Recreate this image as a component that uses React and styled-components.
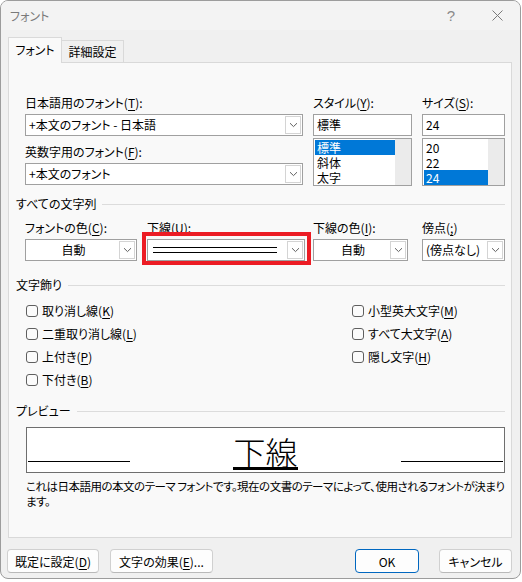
import React from 'react'
import styled, { createGlobalStyle } from 'styled-components'

const GlobalStyle = createGlobalStyle`
    body {
        margin: 0;
        background: #ffffff;
        font-family: "Noto Sans CJK JP", "Noto Sans", sans-serif;
        font-size: 12px;
        color: #000;
        font-feature-settings: "palt";
    }
    * { box-sizing: border-box; }
`;

const Window = styled.div`
    width: 521px;
    height: 579px;
    border: 1px solid #9c9c9c;
    border-radius: 8px;
    background: #f0f0f0;
    display: flex;
    flex-direction: column;
    overflow: hidden;
`;

const TitleBar = styled.div`
    height: 29px;
    display: flex;
    align-items: center;
    padding-left: 9px;
    background: #f3f3f3;
    color: #7a7a7a;
`;

const TitleText = styled.div`
    flex: 1;
`;

const CaptionButton = styled.div`
    width: 46px;
    height: 29px;
    display: flex;
    align-items: center;
    justify-content: center;
    color: #8a8a8a;
    font-family: "Liberation Sans", sans-serif;
    font-size: 15px;
`;

const TabStrip = styled.div`
    margin-top: 7px;
    padding-left: 7px;
    height: 25px;
    display: flex;
    align-items: flex-end;
`;

const Tab = styled.div`
    width: ${p => p.$active ? 54 : 62}px;
    height: ${p => p.$active ? 26 : 22}px;
    margin-bottom: ${p => p.$active ? -1 : 0}px;
    background: ${p => p.$active ? '#f9f9f9' : '#f0f0f0'};
    border: 1px solid #d9d9d9;
    border-bottom: none;
    border-left: ${p => p.$active ? '1px solid #d9d9d9' : 'none'};
    position: relative;
    z-index: ${p => p.$active ? 1 : 0};
    display: flex;
    align-items: center;
    justify-content: center;
    padding-bottom: ${p => p.$active ? 2 : 0}px;
`;

const Panel = styled.div`
    margin: 0 8px 0 7px;
    height: 476px;
    border: 1px solid #d9d9d9;
    background: #f9f9f9;
    padding: 31px 6px 0 7px;
`;

const TopGrid = styled.div`
    margin-left: 9px;
    display: grid;
    grid-template-columns: 278px 99px 83px;
    column-gap: 10px;
`;

const Column = styled.div`
    display: flex;
    flex-direction: column;
    gap: ${p => p.$gap || 0}px;
`;

const Field = styled.div`
    display: flex;
    flex-direction: column;
    width: ${p => p.$w ? p.$w + 'px' : 'auto'};
    margin-left: ${p => p.$ml || 0}px;
`;

const Label = styled.div`
    height: 18px;
    line-height: 18px;
    margin-bottom: 2px;
    white-space: nowrap;

    u { text-decoration-thickness: 1px; text-underline-offset: 2px; }
`;

const ComboBox = styled.div`
    height: 22px;
    border: 1px solid #a0a0a0;
    background: #fff;
    display: flex;
`;

const ComboText = styled.div`
    flex: 1;
    padding-left: 3px;
    line-height: 20px;
    text-align: ${p => p.$center ? 'center' : 'left'};
    white-space: nowrap;
    overflow: hidden;
`;

const ArrowBox = styled.div`
    width: 16px;
    margin: 1px;
    border: 1px solid #d4d4d4;
    display: flex;
    align-items: center;
    justify-content: center;
`;

const TextBox = styled.div`
    height: 22px;
    border: 1px solid #a0a0a0;
    background: #fff;
    padding-left: 3px;
    line-height: 20px;
`;

const ListBox = styled.div`
    height: 48px;
    margin-top: 2px;
    border: 1px solid #a0a0a0;
    background: #fff;
    display: flex;
`;

const ListItems = styled.div`
    flex: 1;
    padding: 1px 0 0 1px;
`;

const ListItem = styled.div`
    height: 15px;
    line-height: 15px;
    padding-left: 2px;
    overflow: hidden;
    background: ${p => p.$selected ? '#0078d7' : 'transparent'};
    color: ${p => p.$selected ? '#fff' : '#000'};
`;

const ScrollTrack = styled.div`
    width: 16px;
    background: #ebebeb;
`;

const GroupHeader = styled.div`
    margin-top: ${p => p.$mt}px;
    height: 16px;
    line-height: 16px;
    display: flex;
    align-items: center;

    &::after {
        content: '';
        flex: 1;
        height: 1px;
        background: #dcdcdc;
        margin-left: 6px;
    }
`;

const FieldRow = styled.div`
    margin-left: 9px;
    margin-top: 7px;
    display: flex;
`;

const Framed = styled.div`
    position: relative;
`;

const DoubleLine = styled.div`
    flex: 1;
    display: flex;
    align-items: center;
    padding: 0 9px 0 5px;

    &::before {
        content: '';
        flex: 1;
        height: 4px;
        border-top: 1px solid #000;
        border-bottom: 1px solid #000;
    }
`;

const RedFrame = styled.div`
    position: absolute;
    top: -7px;
    left: -5px;
    right: -6px;
    bottom: -4px;
    border: 4px solid #ec1c24;
    pointer-events: none;
`;

const CheckArea = styled.div`
    margin-left: 10px;
    margin-top: 6px;
    display: flex;
`;

const CheckColumn = styled.div`
    width: ${p => p.$w ? p.$w + 'px' : 'auto'};
    display: flex;
    flex-direction: column;
`;

const CheckRow = styled.div`
    height: 23px;
    display: flex;
    align-items: center;
    gap: 4px;

    u { text-underline-offset: 2px; }
`;

const CheckMark = styled.span`
    width: 12px;
    height: 12px;
    border: 1px solid #5f5f5f;
    border-radius: 3px;
    background: #fbfbfb;
`;

const PreviewBox = styled.div`
    margin: 8px 0 0 10px;
    width: 479px;
    height: 46px;
    border: 1px solid #6e6e6e;
    background: #fff;
    display: flex;
    justify-content: space-between;
    align-items: flex-end;
    padding: 0 1px 0 1px;
`;

const SideLine = styled.div`
    width: 102px;
    height: 1px;
    background: #000;
    margin-bottom: 10px;
`;

const PreviewWord = styled.div`
    font-size: 32px;
    line-height: 32px;
    font-weight: 300;
    border-bottom: 3px solid #000;
    margin-bottom: 2px;
`;

const Description = styled.div`
    margin: 6px 0 0 10px;
    width: 484px;
    line-height: 15px;
    font-size: 11.5px;
    letter-spacing: -0.5px;
    white-space: nowrap;
`;

const ButtonRow = styled.div`
    margin-top: 11px;
    padding: 0 8px 0 6px;
    display: flex;
    align-items: center;
`;

const Button = styled.div`
    width: ${p => p.$w}px;
    height: 24px;
    margin-left: ${p => p.$ml || 0}px;
    margin-right: ${p => p.$push ? 'auto' : '0'};
    background: #fdfdfd;
    border: 1px solid ${p => p.$primary ? '#0067c0' : '#d0d0d0'};
    border-bottom-color: ${p => p.$primary ? '#0067c0' : '#b9b9b9'};
    border-radius: 4px;
    display: flex;
    align-items: center;
    justify-content: center;
    white-space: nowrap;

    u { text-underline-offset: 2px; }
`;

function Chevron() {
    return (
        <svg width="9" height="6" viewBox="0 0 9 6">
            <path d="M1 1.2 L4.5 4.6 L8 1.2" fill="none" stroke="#606060" strokeWidth="1" />
        </svg>
    )
}

function Combo({ children, center }) {
    return (
        <ComboBox>
            {typeof children === 'string'
                ? <ComboText $center={center}>{children}</ComboText>
                : children}
            <ArrowBox><Chevron /></ArrowBox>
        </ComboBox>
    )
}

function Check({ children }) {
    return (
        <CheckRow>
            <CheckMark />
            <span>{children}</span>
        </CheckRow>
    )
}

export default function App() {
    return (
        <>
            <GlobalStyle />
            <Window>
                <TitleBar>
                    <TitleText>フォント</TitleText>
                    <CaptionButton>?</CaptionButton>
                    <CaptionButton>
                        <svg width="11" height="11" viewBox="0 0 11 11">
                            <path d="M0.5 0.5 L10.5 10.5 M10.5 0.5 L0.5 10.5" stroke="#7a7a7a" strokeWidth="1" />
                        </svg>
                    </CaptionButton>
                </TitleBar>

                <TabStrip>
                    <Tab $active>フォント</Tab>
                    <Tab>詳細設定</Tab>
                </TabStrip>

                <Panel>
                    <TopGrid>
                        <Column $gap={7}>
                            <Field>
                                <Label>日本語用のフォント(<u>T</u>):</Label>
                                <Combo>+本文のフォント - 日本語</Combo>
                            </Field>
                            <Field>
                                <Label>英数字用のフォント(<u>F</u>):</Label>
                                <Combo>+本文のフォント</Combo>
                            </Field>
                        </Column>
                        <Column>
                            <Label>スタイル(<u>Y</u>):</Label>
                            <TextBox>標準</TextBox>
                            <ListBox>
                                <ListItems>
                                    <ListItem $selected>標準</ListItem>
                                    <ListItem>斜体</ListItem>
                                    <ListItem>太字</ListItem>
                                </ListItems>
                                <ScrollTrack />
                            </ListBox>
                        </Column>
                        <Column>
                            <Label>サイズ(<u>S</u>):</Label>
                            <TextBox>24</TextBox>
                            <ListBox>
                                <ListItems>
                                    <ListItem>20</ListItem>
                                    <ListItem>22</ListItem>
                                    <ListItem $selected>24</ListItem>
                                </ListItems>
                                <ScrollTrack />
                            </ListBox>
                        </Column>
                    </TopGrid>

                    <GroupHeader $mt={10}>すべての文字列</GroupHeader>
                    <FieldRow>
                        <Field $w={112}>
                            <Label>フォントの色(<u>C</u>):</Label>
                            <Combo center>自動</Combo>
                        </Field>
                        <Field $w={158} $ml={10}>
                            <Label>下線(<u>U</u>):</Label>
                            <Framed>
                                <Combo><DoubleLine /></Combo>
                                <RedFrame />
                            </Framed>
                        </Field>
                        <Field $w={95} $ml={8}>
                            <Label>下線の色(<u>I</u>):</Label>
                            <Combo center>自動</Combo>
                        </Field>
                        <Field $w={83} $ml={14}>
                            <Label>傍点(<u>;</u>)</Label>
                            <Combo>(傍点なし)</Combo>
                        </Field>
                    </FieldRow>

                    <GroupHeader $mt={16}>文字飾り</GroupHeader>
                    <CheckArea>
                        <CheckColumn $w={326}>
                            <Check>取り消し線(<u>K</u>)</Check>
                            <Check>二重取り消し線(<u>L</u>)</Check>
                            <Check>上付き(<u>P</u>)</Check>
                            <Check>下付き(<u>B</u>)</Check>
                        </CheckColumn>
                        <CheckColumn>
                            <Check>小型英大文字(<u>M</u>)</Check>
                            <Check>すべて大文字(<u>A</u>)</Check>
                            <Check>隠し文字(<u>H</u>)</Check>
                        </CheckColumn>
                    </CheckArea>

                    <GroupHeader $mt={12}>プレビュー</GroupHeader>
                    <PreviewBox>
                        <SideLine />
                        <PreviewWord>下線</PreviewWord>
                        <SideLine />
                    </PreviewBox>
                    <Description>
                        これは日本語用の本文のテーマ フォントです。現在の文書のテーマによって、使用されるフォントが決まり<br />ます。
                    </Description>
                </Panel>

                <ButtonRow>
                    <Button $w={92}>既定に設定(<u>D</u>)</Button>
                    <Button $w={103} $ml={11} $push>文字の効果(<u>E</u>)...</Button>
                    <Button $w={64} $primary>OK</Button>
                    <Button $w={73} $ml={20}>キャンセル</Button>
                </ButtonRow>
            </Window>
        </>
    )
}
